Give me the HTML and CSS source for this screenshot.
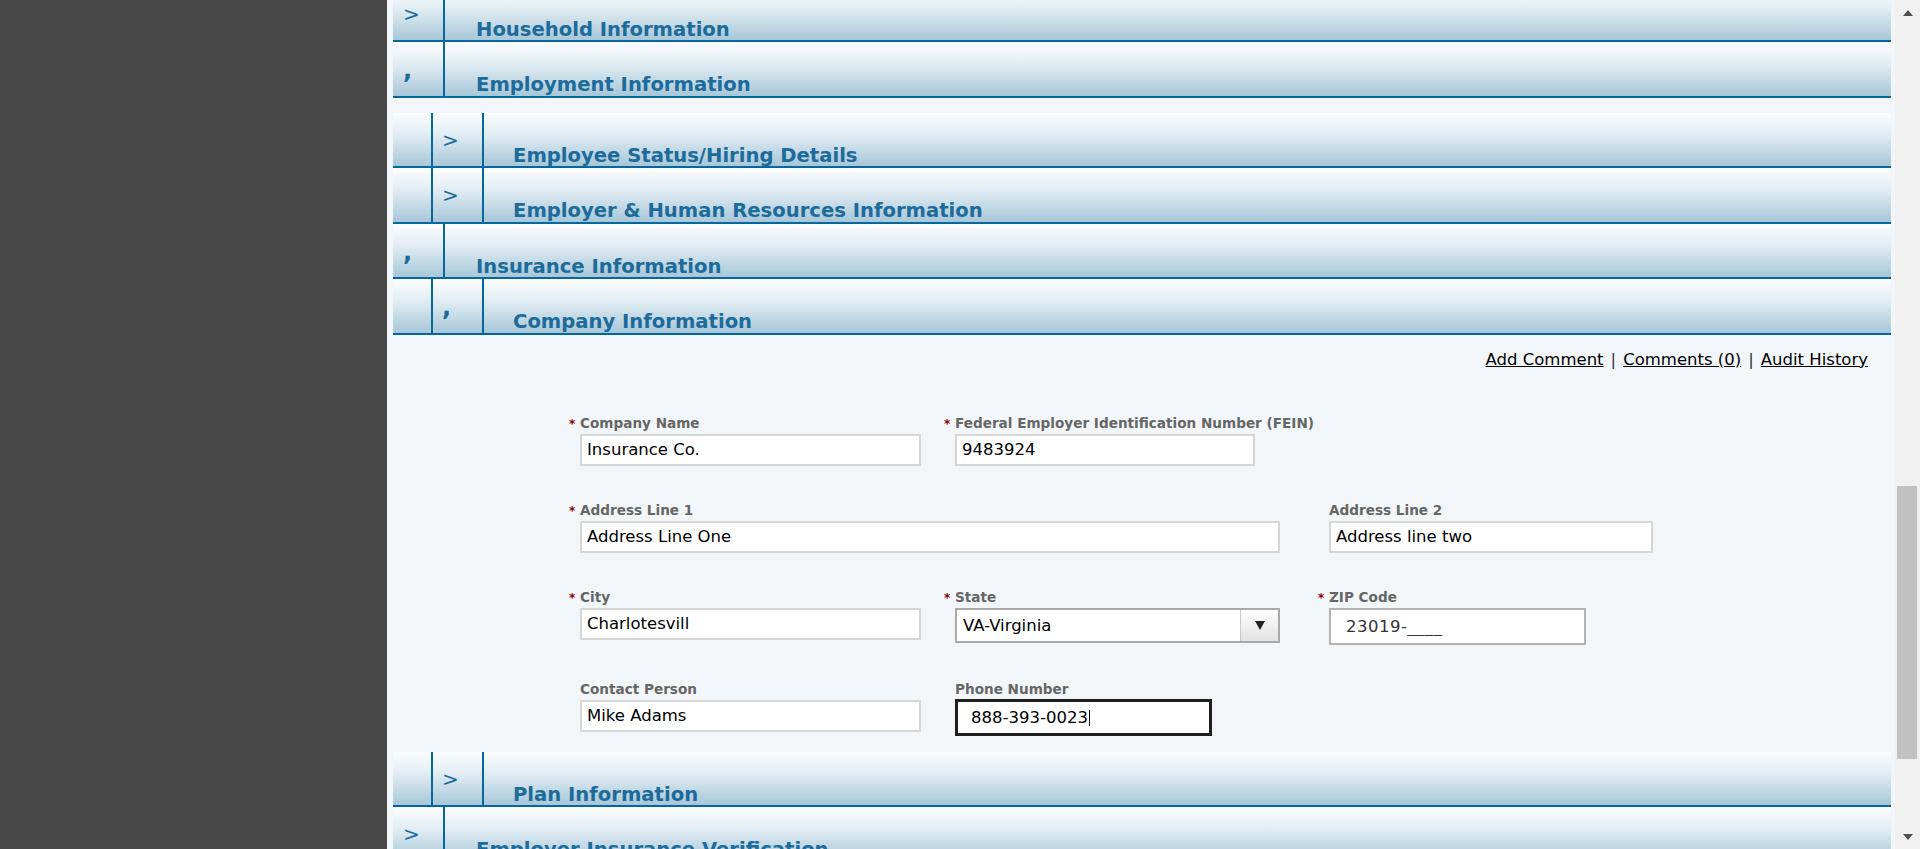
FILE: index.html
```html
<!DOCTYPE html>
<html lang="en">
<head>
<meta charset="utf-8">
<title>Insurance Information</title>
<link rel="stylesheet" href="styles.css">
</head>
<body>
<div class="app">
  <aside class="side"></aside>
  <main class="main">
    <div class="stack">
      <div class="hdr top">
        <div class="ico">&gt;</div>
        <div class="ttl">Household Information</div>
      </div>
      <div class="hdr top">
        <div class="ico"><span class="comma">,</span></div>
        <div class="ttl">Employment Information</div>
      </div>
      <div class="group pad-top">
        <div class="hdr sub">
          <div class="indent"></div>
          <div class="ico">&gt;</div>
          <div class="ttl">Employee Status/Hiring Details</div>
        </div>
        <div class="hdr sub">
          <div class="indent"></div>
          <div class="ico">&gt;</div>
          <div class="ttl">Employer &amp; Human Resources Information</div>
        </div>
      </div>
      <div class="hdr top">
        <div class="ico"><span class="comma">,</span></div>
        <div class="ttl">Insurance Information</div>
      </div>
      <div class="group">
        <div class="hdr sub">
          <div class="indent"></div>
          <div class="ico"><span class="comma">,</span></div>
          <div class="ttl">Company Information</div>
        </div>
        <div class="panel">
          <div class="links">
            <a href="#">Add Comment</a><span class="sep">|</span><a href="#">Comments (0)</a><span class="sep">|</span><a href="#">Audit History</a>
          </div>
          <div class="form">
            <div class="fld">
              <label class="lbl"><span class="req">*</span>Company Name</label>
              <input class="inp w341" type="text" value="Insurance Co.">
            </div>
            <div class="fld">
              <label class="lbl"><span class="req">*</span>Federal Employer Identification Number (FEIN)</label>
              <input class="inp w300" type="text" value="9483924">
            </div>
            <div class="fld span2">
              <label class="lbl"><span class="req">*</span>Address Line 1</label>
              <input class="inp w700" type="text" value="Address Line One">
            </div>
            <div class="fld">
              <label class="lbl">Address Line 2</label>
              <input class="inp w324" type="text" value="Address line two">
            </div>
            <div class="fld">
              <label class="lbl"><span class="req">*</span>City</label>
              <input class="inp w341" type="text" value="Charlotesvill">
            </div>
            <div class="fld">
              <label class="lbl"><span class="req">*</span>State</label>
              <div class="selwrap">
                <select class="sel"><option>VA-Virginia</option></select>
                <span class="selbtn"><span class="tri-down"></span></span>
              </div>
            </div>
            <div class="fld">
              <label class="lbl"><span class="req">*</span>ZIP Code</label>
              <input class="inp zip" type="text" value="23019-____">
            </div>
            <div class="fld">
              <label class="lbl">Contact Person</label>
              <input class="inp w341" type="text" value="Mike Adams">
            </div>
            <div class="fld">
              <label class="lbl">Phone Number</label>
              <div class="phone-wrap">
                <input class="inp phone" type="text" value="888-393-0023">
                <span class="caret"></span>
              </div>
            </div>
          </div>
        </div>
        <div class="hdr sub">
          <div class="indent"></div>
          <div class="ico">&gt;</div>
          <div class="ttl">Plan Information</div>
        </div>
      </div>
      <div class="hdr top">
        <div class="ico">&gt;</div>
        <div class="ttl">Employer Insurance Verification</div>
      </div>
    </div>
  </main>
  <div class="scrollbar">
    <div class="sb-btn"><span class="tri-up"></span></div>
    <div class="sb-track"><div class="thumb"></div></div>
    <div class="sb-btn"><span class="tri-dn"></span></div>
  </div>
</div>
</body>
</html>
```

FILE: styles.css
```css
html, body {
  margin: 0;
  height: 100%;
}
body {
  overflow: hidden;
  font-family: "DejaVu Sans", Verdana, sans-serif;
}
.app {
  display: flex;
  height: 849px;
}
.side {
  width: 387px;
  flex: none;
  background: #484848;
}
.main {
  flex: 1;
  min-width: 0;
  background: #f2f6f9;
  padding: 0 4px 0 6px;
  overflow: hidden;
}
.stack {
  margin-top: -13.5px;
}

/* section headers */
.hdr {
  display: flex;
  height: 53.5px;
  border-bottom: 2px solid #05679b;
  background: linear-gradient(to bottom, #fbfdfe 0%, #e2edf3 40%, #a7c7d9 100%);
}
.ico {
  flex: none;
  color: #1c6b9b;
  font-size: 20px;
  line-height: 24px;
  padding-top: 15px;
  border-right: 2px solid #05679b;
}
.comma {
  font-weight: bold;
  font-size: 24px;
  vertical-align: -2px;
}
.top .ico {
  width: 40px;
  padding-left: 10px;
}
.sub .indent {
  flex: none;
  width: 38px;
  border-right: 2px solid #05679b;
}
.sub .ico {
  width: 40px;
  padding-left: 9px;
}
.ttl {
  font-weight: bold;
  font-size: 19.6px;
  line-height: 18px;
  padding-top: 34px;
  color: #1c6b9b;
  white-space: nowrap;
}
.top .ttl { padding-left: 31px; }
.sub .ttl { padding-left: 29px; }

.pad-top { padding-top: 15px; }

/* company panel */
.panel {
  padding: 15px 23px 16px 0;
}
.links {
  text-align: right;
  font-size: 16.5px;
  line-height: 20px;
  color: #000;
}
.links a {
  color: #000;
  text-decoration: underline;
}
.links .sep {
  color: #333;
  margin: 0 7px;
}
.form {
  margin-top: 46px;
  padding-left: 187px;
  display: grid;
  grid-template-columns: 375px 374px 330px;
  row-gap: 37px;
  align-items: start;
}
.span2 { grid-column: span 2; }
.lbl {
  display: block;
  height: 15px;
  font-weight: bold;
  font-size: 13.6px;
  line-height: 15px;
  color: #666;
  margin-bottom: 3px;
  white-space: nowrap;
}
.req {
  display: inline-block;
  vertical-align: top;
  width: 11px;
  height: 15px;
  margin-left: -11px;
  color: #8b0000;
  font-size: 12px;
  line-height: 17px;
}
.inp {
  display: block;
  box-sizing: border-box;
  height: 32px;
  margin: 0;
  border: 2px solid #d6d6d6;
  border-radius: 0;
  padding: 0 5px;
  background: #fff;
  font-family: "DejaVu Sans", Verdana, sans-serif;
  font-size: 16.5px;
  color: #000;
  outline: none;
}
.w341 { width: 341px; }
.w300 { width: 300px; }
.w700 { width: 700px; }
.w324 { width: 324px; }
.zip {
  width: 257px;
  height: 37px;
  border-color: #b3b3b3;
  padding-left: 15px;
  color: #333;
  letter-spacing: 0.5px;
}
.phone-wrap {
  position: relative;
  width: 257px;
  margin-top: -1px;
}
.phone {
  width: 257px;
  height: 37px;
  border: 3px solid #1f1f1f;
  padding-left: 13px;
}
.caret {
  position: absolute;
  left: 134px;
  top: 11px;
  width: 1px;
  height: 16px;
  background: #000;
}
.selwrap {
  display: flex;
  box-sizing: border-box;
  width: 325px;
  height: 35px;
  border: 2px solid #a9a9a9;
  background: #fff;
}
.sel {
  flex: 1;
  min-width: 0;
  appearance: none;
  -webkit-appearance: none;
  border: 0;
  margin: 0;
  padding: 0 0 0 6px;
  background: transparent;
  font-family: "DejaVu Sans", Verdana, sans-serif;
  font-size: 16.5px;
  color: #000;
  outline: none;
}
.selbtn {
  flex: none;
  width: 37px;
  border-left: 1px solid #c9c9c9;
  background: linear-gradient(to bottom, #ffffff, #e2e2e2);
  display: flex;
  align-items: center;
  justify-content: center;
}
.tri-down {
  width: 0;
  height: 0;
  border-left: 5px solid transparent;
  border-right: 5px solid transparent;
  border-top: 9px solid #222;
}

/* scrollbar */
.scrollbar {
  width: 25px;
  flex: none;
  background: #f0f0f0;
  display: flex;
  flex-direction: column;
}
.sb-btn {
  height: 25px;
  flex: none;
  display: flex;
  align-items: center;
  justify-content: center;
}
.tri-up {
  width: 0;
  height: 0;
  border-left: 5.5px solid transparent;
  border-right: 5.5px solid transparent;
  border-bottom: 6px solid #505050;
}
.tri-dn {
  width: 0;
  height: 0;
  border-left: 5.5px solid transparent;
  border-right: 5.5px solid transparent;
  border-top: 6px solid #505050;
}
.sb-track {
  flex: 1;
}
.thumb {
  margin: 461px 3px 0 2px;
  height: 273px;
  background: #c1c1c1;
}
```
